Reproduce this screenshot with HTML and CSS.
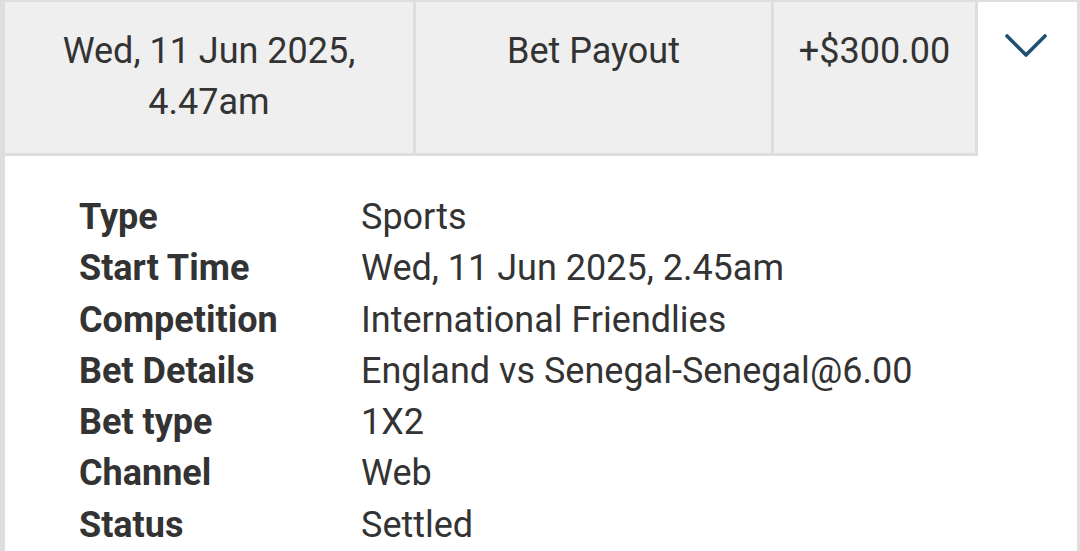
FILE: index.html
```html
<!DOCTYPE html>
<html lang="en">
<head>
<meta charset="utf-8">
<link rel="stylesheet" href="styles.css">
</head>
<body>
<div class="card">
  <div class="head">
    <div class="cell c-date">Wed, 11 Jun 2025,<br>4.47am</div>
    <div class="cell c-type">Bet Payout</div>
    <div class="cell c-amt">+$300.00</div>
    <div class="toggle">
      <svg width="44" height="26" viewBox="0 0 44 26"><polyline points="3,3 22,22 41,3" fill="none" stroke="#1f5070" stroke-width="3.6" stroke-linecap="round" stroke-linejoin="round"/></svg>
    </div>
  </div>
  <div class="details">
    <div class="k">Type</div><div class="v">Sports</div>
    <div class="k">Start Time</div><div class="v">Wed, 11 Jun 2025, 2.45am</div>
    <div class="k">Competition</div><div class="v">International Friendlies</div>
    <div class="k">Bet Details</div><div class="v">England vs Senegal-Senegal@6.00</div>
    <div class="k">Bet type</div><div class="v">1X2</div>
    <div class="k">Channel</div><div class="v">Web</div>
    <div class="k">Status</div><div class="v">Settled</div>
  </div>
</div>
</body>
</html>
```

FILE: styles.css
```css
html, body {
  margin: 0;
  padding: 0;
  background: #ffffff;
}
body {
  font-family: Roboto, "Noto Sans", sans-serif;
  color: #333333;
}
.card {
  height: 551px;
  border-left: 5px solid #dedede;
  border-right: 3px solid #dedede;
  box-sizing: border-box;
  overflow: hidden;
}
.head {
  display: flex;
  height: 156px;
}
.cell {
  box-sizing: border-box;
  background: #efefef;
  border-top: 2px solid #dedede;
  border-right: 3px solid #dedede;
  border-bottom: 3px solid #dedede;
  text-align: center;
  font-size: 36px;
  line-height: 51px;
  padding-top: 24px;
}
.c-date { width: 411px; }
.c-type { width: 358px; }
.c-amt { width: 204px; }
.toggle {
  flex: 1;
  border-top: 2px solid #dedede;
  display: flex;
  justify-content: center;
  padding-top: 31px;
  padding-right: 4px;
}
.toggle svg { display: block; }
.details {
  display: grid;
  grid-template-columns: 282px auto;
  padding: 36px 0 0 74px;
  font-size: 36px;
  line-height: 51.3px;
}
.k { font-weight: 700; }
```
